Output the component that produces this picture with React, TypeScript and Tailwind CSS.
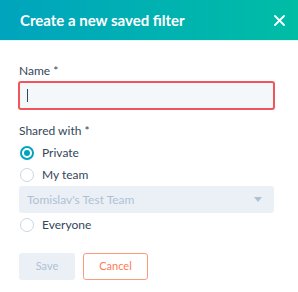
import React from "react";

const Radio = ({ checked, label }: { checked?: boolean; label: string }) => (
  <label className="flex h-[22px] items-center gap-[8px]">
    <span
      className={
        checked
          ? "flex h-[14px] w-[14px] items-center justify-center rounded-full border-2 border-[#00a4bd] bg-white"
          : "h-[14px] w-[14px] rounded-full border border-[#cbd6e2] bg-white"
      }
    >
      {checked && <span className="h-[6px] w-[6px] rounded-full bg-[#00a4bd]" />}
    </span>
    <span className="text-[12px] text-[#33475b]">{label}</span>
  </label>
);

export default function App() {
  return (
    <div className="h-[292px] w-[298px] overflow-hidden bg-white font-['Lato',sans-serif]">
      <div className="flex h-[40px] items-center justify-between bg-gradient-to-r from-[#00a4bd] to-[#00bda5] pl-[20px] pr-[13px]">
        <h1 className="text-[15px] font-bold text-white">Create a new saved filter</h1>
        <svg width="11" height="11" viewBox="0 0 11 11">
          <path d="M1 1L10 10M10 1L1 10" stroke="white" strokeWidth="1.8" strokeLinecap="round" />
        </svg>
      </div>
      <div className="h-px bg-[#e5f5f8]" />
      <div className="pl-[19px] pr-[23px] pt-[22px]">
        <div className="h-[16px] text-[12px] leading-[16px] text-[#33475b]">Name *</div>
        <div className="-ml-px mt-[2px] flex h-[29px] items-center rounded-[3px] border-2 border-[#f2545b] bg-[#f5f8fa] px-[7px]">
          <span className="h-[13px] w-px bg-[#33475b]" />
        </div>
        <div className="mt-[13px] h-[16px] text-[12px] leading-[16px] text-[#33475b]">Shared with *</div>
        <div className="mt-[3px] px-px">
          <Radio checked label="Private" />
          <Radio label="My team" />
        </div>
        <div className="mr-px flex h-[27px] items-center justify-between rounded-[3px] bg-[#eaf0f6] pl-[8px] pr-[12px]">
          <span className="text-[12px] text-[#b0c1d4]">Tomislav's Test Team</span>
          <svg width="8" height="5" viewBox="0 0 8 5">
            <path d="M0 0H8L4 5Z" fill="#b0c1d4" />
          </svg>
        </div>
        <div className="mt-px px-px">
          <Radio label="Everyone" />
        </div>
        <div className="mt-[17px] flex gap-[8px]">
          <button className="h-[27px] w-[56px] rounded-[3px] bg-[#eaf0f6] text-[11px] text-[#b0c1d4]">Save</button>
          <button className="h-[27px] w-[65px] rounded-[3px] border border-[#ff9a80] bg-white text-[11px] text-[#ff7a59]">Cancel</button>
        </div>
      </div>
    </div>
  );
}
